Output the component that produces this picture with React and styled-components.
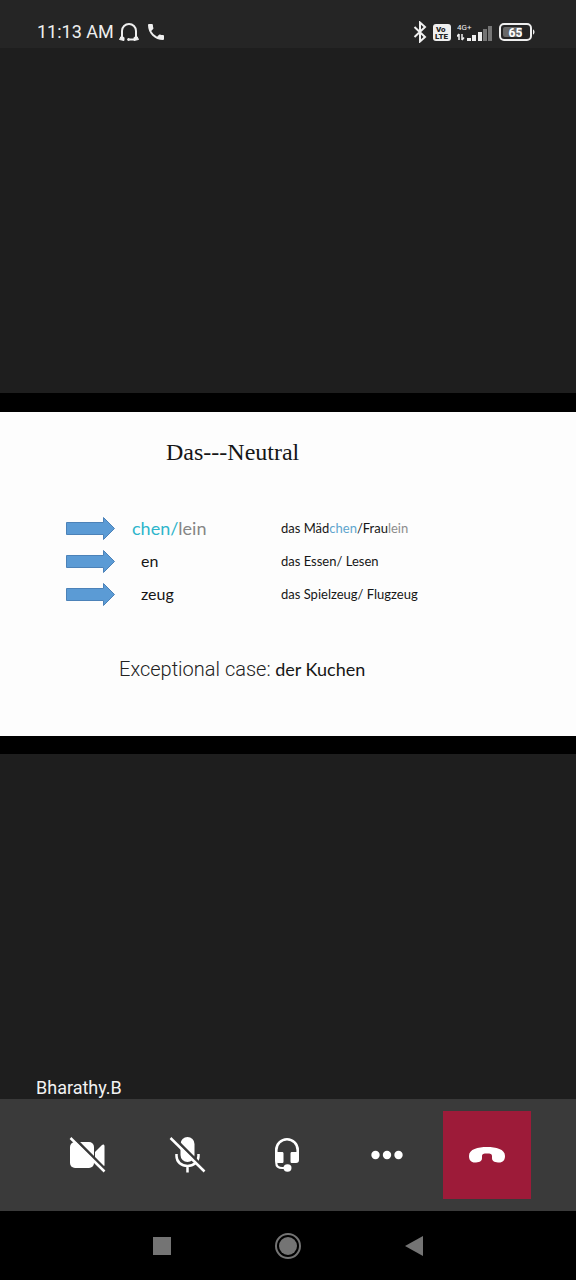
import React from "react";
import styled, { createGlobalStyle } from "styled-components";

const GlobalStyle = createGlobalStyle`
  * { box-sizing: border-box; }
  body { margin: 0; background: #1e1e1e; font-family: Roboto, "Liberation Sans", sans-serif; }
`;

const Screen = styled.div`
  display: flex;
  flex-direction: column;
  min-height: 100vh;
  background: #1e1e1e;
`;

const StatusBar = styled.header`
  display: flex;
  align-items: center;
  justify-content: space-between;
  height: 48px;
  padding: 16px 40px 0 37px;
  background: #252525;
  color: #efefef;
`;

const StatusGroup = styled.div`
  display: flex;
  align-items: center;
  gap: ${({ $gap }) => $gap}px;
`;

const Clock = styled.time`
  font-size: 18px;
  line-height: 24px;
`;

const Stage = styled.main`
  display: flex;
  flex: 1;
  flex-direction: column;
`;

const Participant = styled.div`
  display: flex;
  flex: 1 0 60px;
  align-items: flex-end;
  padding-left: 36px;
  color: #f2f2f2;
  font-size: 18px;
  line-height: 22px;
`;

const SharedContent = styled.section`
  padding: 19px 0 18px;
  background: #000;
`;

const Slide = styled.article`
  min-height: 324px;
  padding-top: 26px;
  background: #fdfdfd;
  color: #161616;
  font-family: Lato, "Open Sans", sans-serif;
`;

const SlideTitle = styled.h1`
  margin: 0 0 46px 166px;
  font-family: "Liberation Serif", serif;
  font-size: 24px;
  font-weight: 400;
  line-height: 28px;
`;

const Endings = styled.ul`
  margin: 0 0 46px;
  padding: 0 0 0 66px;
  list-style: none;
`;

const EndingRow = styled.li`
  display: grid;
  grid-template-columns: 66px 149px 1fr;
  align-items: center;
  height: 33px;
`;

const Ending = styled.span`
  padding: 0 0 2px ${({ $indent }) => ($indent ? 9 : 0)}px;
  font-size: ${({ $large }) => ($large ? 18 : 16)}px;
  line-height: 24px;
`;

const Example = styled.span`
  padding-bottom: 2px;
  font-size: 13px;
  line-height: 20px;
`;

const Tint = styled.span`
  color: ${({ $color }) => $color};
`;

const Exception = styled.p`
  margin: 0 0 0 119px;
  font-size: 18px;
  line-height: 24px;
`;

const ExceptionLabel = styled.span`
  color: #222;
  font-family: Roboto, sans-serif;
  font-size: 20px;
  font-weight: 300;
`;

const Controls = styled.div`
  display: flex;
  justify-content: center;
  gap: 12px;
  padding: 12px 14px 12px 12px;
  background: #3a3a3a;
`;

const ControlButton = styled.button`
  display: grid;
  place-items: center;
  width: 88px;
  height: 88px;
  padding: 0;
  border: 0;
  background: ${({ $danger }) => ($danger ? "#9d1b39" : "transparent")};
  color: #fff;
`;

const SystemNav = styled.nav`
  display: flex;
  justify-content: center;
  gap: 86px;
  height: 69px;
  background: #000;
`;

const NavButton = styled.button`
  display: grid;
  place-items: center;
  width: 40px;
  padding: 0;
  border: 0;
  background: transparent;
  color: #747474;
`;

const Icon = styled.svg`
  display: block;
  flex: none;
`;

const BadgeText = styled.text`
  font-family: Roboto, sans-serif;
  font-size: ${({ $size }) => $size}px;
  font-weight: ${({ $weight }) => $weight || 700};
`;

function HeadphonesIcon() {
  return (
    <Icon width="22" height="20" viewBox="0 0 22 20" fill="none" stroke="currentColor" strokeWidth="2">
      <path d="M4 16V9a7 7 0 0 1 14 0v7" />
      <path d="M1.500 17.500l1.500-3 3 1v3zM20.500 17.500l-1.500-3-3 1v3z" fill="currentColor" strokeWidth="1" />
      <path d="M10 17.500h7" />
      <circle cx="10.500" cy="17.500" r="1" fill="currentColor" strokeWidth="1" />
    </Icon>
  );
}

function PhoneIcon() {
  return (
    <Icon width="16" height="16" viewBox="0 0 18 18" fill="currentColor">
      <path d="M3.620 7.790a15.100 15.100 0 0 0 6.590 6.590l2.200-2.200a1 1 0 0 1 1.020-.24c1.120.37 2.330.57 3.570.57.550 0 1 .45 1 1V17c0 .55-.45 1-1 1C7.600 18 0 10.400 0 1c0-.55.45-1 1-1h3.500c.55 0 1 .45 1 1 0 1.250.2 2.450.57 3.570.11.350.03.740-.25 1.020z" />
    </Icon>
  );
}

function BluetoothIcon() {
  return (
    <Icon width="14" height="22" viewBox="0 0 14 22" fill="none" stroke="currentColor" strokeWidth="2">
      <path d="M1.500 6l10.500 10-5 4.500v-19L12 6 1.500 16" />
    </Icon>
  );
}

function VolteIcon() {
  return (
    <Icon width="18" height="17" viewBox="0 0 18 17">
      <rect width="18" height="17" rx="3" fill="#efefef" />
      <g fill="#252525">
        <BadgeText x="3" y="8" $size="8" $weight="900">Vo</BadgeText>
        <BadgeText x="2" y="15" $size="8" $weight="900">LTE</BadgeText>
      </g>
    </Icon>
  );
}

function SignalIcon() {
  return (
    <Icon width="36" height="19" viewBox="0 0 36 19" fill="currentColor">
      <BadgeText x="0" y="7" $size="8" $weight="400">4G+</BadgeText>
      <path d="M2 11v6M0 13.500l2-2.500M5 11v6M7 14.500l-2 2.500" fill="none" stroke="currentColor" strokeWidth="1.500" />
      <rect x="10" y="15" width="4" height="3" />
      <rect x="15" y="12" width="4" height="6" />
      <rect x="21" y="9" width="4" height="9" />
      <g fill="#747474">
        <rect x="26" y="6" width="4" height="12" />
        <rect x="31" y="3" width="4" height="15" />
      </g>
    </Icon>
  );
}

function BatteryIcon() {
  return (
    <Icon width="37" height="18" viewBox="0 0 37 18">
      <rect x="4" y="4" width="19" height="10" rx="2" fill="#686868" />
      <rect x="1" y="1" width="31" height="16" rx="4" fill="none" stroke="#efefef" strokeWidth="2" />
      <path d="M34 6.500c2 .5 2 4.500 0 5z" fill="#efefef" />
      <BadgeText x="16.500" y="13.500" textAnchor="middle" fill="#fff" $size="12">65</BadgeText>
    </Icon>
  );
}

function ArrowIcon() {
  return (
    <Icon width="50" height="25" viewBox="0 0 50 25">
      <path d="M.5 6.500h37v-5l11 11-11 11v-5H.5z" fill="#5b9bd5" stroke="#4c82b8" />
    </Icon>
  );
}

function CameraOffIcon() {
  return (
    <Icon width="38" height="38" viewBox="0 0 38 38">
      <rect x="2" y="6" width="24" height="26" rx="5" fill="currentColor" />
      <path d="M27 16l7-7c1-1 2.500-.5 2.500 1v19c0 1.500-1.500 2-2.500 1l-7-7z" fill="currentColor" />
      <path d="M5 1l34 34" stroke="#3a3a3a" strokeWidth="3" />
      <path d="M2.500 2l34 33.500" stroke="currentColor" strokeWidth="2.500" />
    </Icon>
  );
}

function MicOffIcon() {
  return (
    <Icon width="38" height="38" viewBox="0 0 38 38" fill="none">
      <rect x="12.500" y="1" width="14" height="25" rx="7" fill="currentColor" />
      <path d="M8.500 18v2c0 6 5 10 11 10s11-4 11-10v-2M19.500 30v6.500" stroke="currentColor" strokeWidth="2.500" />
      <path d="M5 1l34 34" stroke="#3a3a3a" strokeWidth="3" />
      <path d="M2.500 2l34 33.500" stroke="currentColor" strokeWidth="2.500" />
    </Icon>
  );
}

function HeadsetIcon() {
  return (
    <Icon width="26" height="36" viewBox="0 0 26 36" fill="none">
      <path d="M2.300 18v-5a10.700 10.700 0 0 1 21.400 0v5" stroke="currentColor" strokeWidth="2.600" />
      <path d="M1 15h7c1 0 1.500.5 1.500 1.500v8c0 1-.5 1.500-1.500 1.500H4c-2 0-3-1-3-3zM25 15h-7c-1 0-1.500.5-1.500 1.500v8c0 1 .5 1.500 1.500 1.500h4c2 0 3-1 3-3z" fill="currentColor" />
      <path d="M2.300 22v4c0 3 2 5 6 5h4" stroke="currentColor" strokeWidth="2.200" />
      <ellipse cx="13.500" cy="31" rx="4" ry="3.700" fill="currentColor" />
    </Icon>
  );
}

function MoreIcon() {
  return (
    <Icon width="32" height="10" viewBox="0 0 32 10" fill="currentColor">
      <circle cx="4.500" cy="5" r="4.200" />
      <circle cx="16" cy="5" r="4.200" />
      <circle cx="27.500" cy="5" r="4.200" />
    </Icon>
  );
}

function HangUpIcon() {
  return (
    <Icon width="36" height="16" viewBox="0 0 36 16" fill="currentColor">
      <path d="M18 0C9 0 0 2 0 9c0 4.500 2.500 7 7 6.500 4-.5 6-1.500 6-4.500V9c0-2 1.500-2.500 5-2.500s5 .5 5 2.500v2c0 3 2 4 6 4.500 4.500.5 7-2 7-6.500C36 2 27 0 18 0z" />
    </Icon>
  );
}

const endings = [
  {
    id: "chen",
    large: true,
    ending: <><Tint $color="#2eb5cb">chen/</Tint><Tint $color="#858585">lein</Tint></>,
    example: <>das Mäd<Tint $color="#60a5cd">chen</Tint>/Frau<Tint $color="#8c8c8c">lein</Tint></>,
  },
  { id: "en", ending: "en", example: "das Essen/ Lesen" },
  { id: "zeug", ending: "zeug", example: "das Spielzeug/ Flugzeug" },
];

const controls = [
  { label: "Turn camera on", Glyph: CameraOffIcon },
  { label: "Unmute microphone", Glyph: MicOffIcon },
  { label: "Audio device", Glyph: HeadsetIcon },
  { label: "More options", Glyph: MoreIcon },
  { label: "Hang up", Glyph: HangUpIcon, danger: true },
];

export default function App() {
  return (
    <Screen>
      <GlobalStyle />
      <StatusBar>
        <StatusGroup $gap={4}>
          <Clock>11:13 AM</Clock>
          <StatusGroup $gap={8}>
            <HeadphonesIcon />
            <PhoneIcon />
          </StatusGroup>
        </StatusGroup>
        <StatusGroup $gap={6}>
          <BluetoothIcon />
          <VolteIcon />
          <SignalIcon />
          <BatteryIcon />
        </StatusGroup>
      </StatusBar>
      <Stage>
        <Participant />
        <SharedContent>
          <Slide>
            <SlideTitle>Das---Neutral</SlideTitle>
            <Endings>
              {endings.map((row) => (
                <EndingRow key={row.id}>
                  <ArrowIcon />
                  <Ending $large={row.large} $indent={!row.large}>{row.ending}</Ending>
                  <Example>{row.example}</Example>
                </EndingRow>
              ))}
            </Endings>
            <Exception>
              <ExceptionLabel>Exceptional case:</ExceptionLabel> der Kuchen
            </Exception>
          </Slide>
        </SharedContent>
        <Participant>Bharathy.B</Participant>
      </Stage>
      <Controls>
        {controls.map(({ label, Glyph, danger }) => (
          <ControlButton key={label} type="button" aria-label={label} $danger={danger}>
            <Glyph />
          </ControlButton>
        ))}
      </Controls>
      <SystemNav>
        <NavButton type="button" aria-label="Recent apps">
          <Icon width="18" height="18" viewBox="0 0 18 18"><rect width="18" height="18" fill="currentColor" /></Icon>
        </NavButton>
        <NavButton type="button" aria-label="Home">
          <Icon width="26" height="26" viewBox="0 0 26 26">
            <circle cx="13" cy="13" r="12" fill="none" stroke="currentColor" strokeWidth="2" />
            <circle cx="13" cy="13" r="9" fill="currentColor" />
          </Icon>
        </NavButton>
        <NavButton type="button" aria-label="Back">
          <Icon width="18" height="20" viewBox="0 0 18 20"><path d="M18 0v20L0 10z" fill="currentColor" /></Icon>
        </NavButton>
      </SystemNav>
    </Screen>
  );
}
